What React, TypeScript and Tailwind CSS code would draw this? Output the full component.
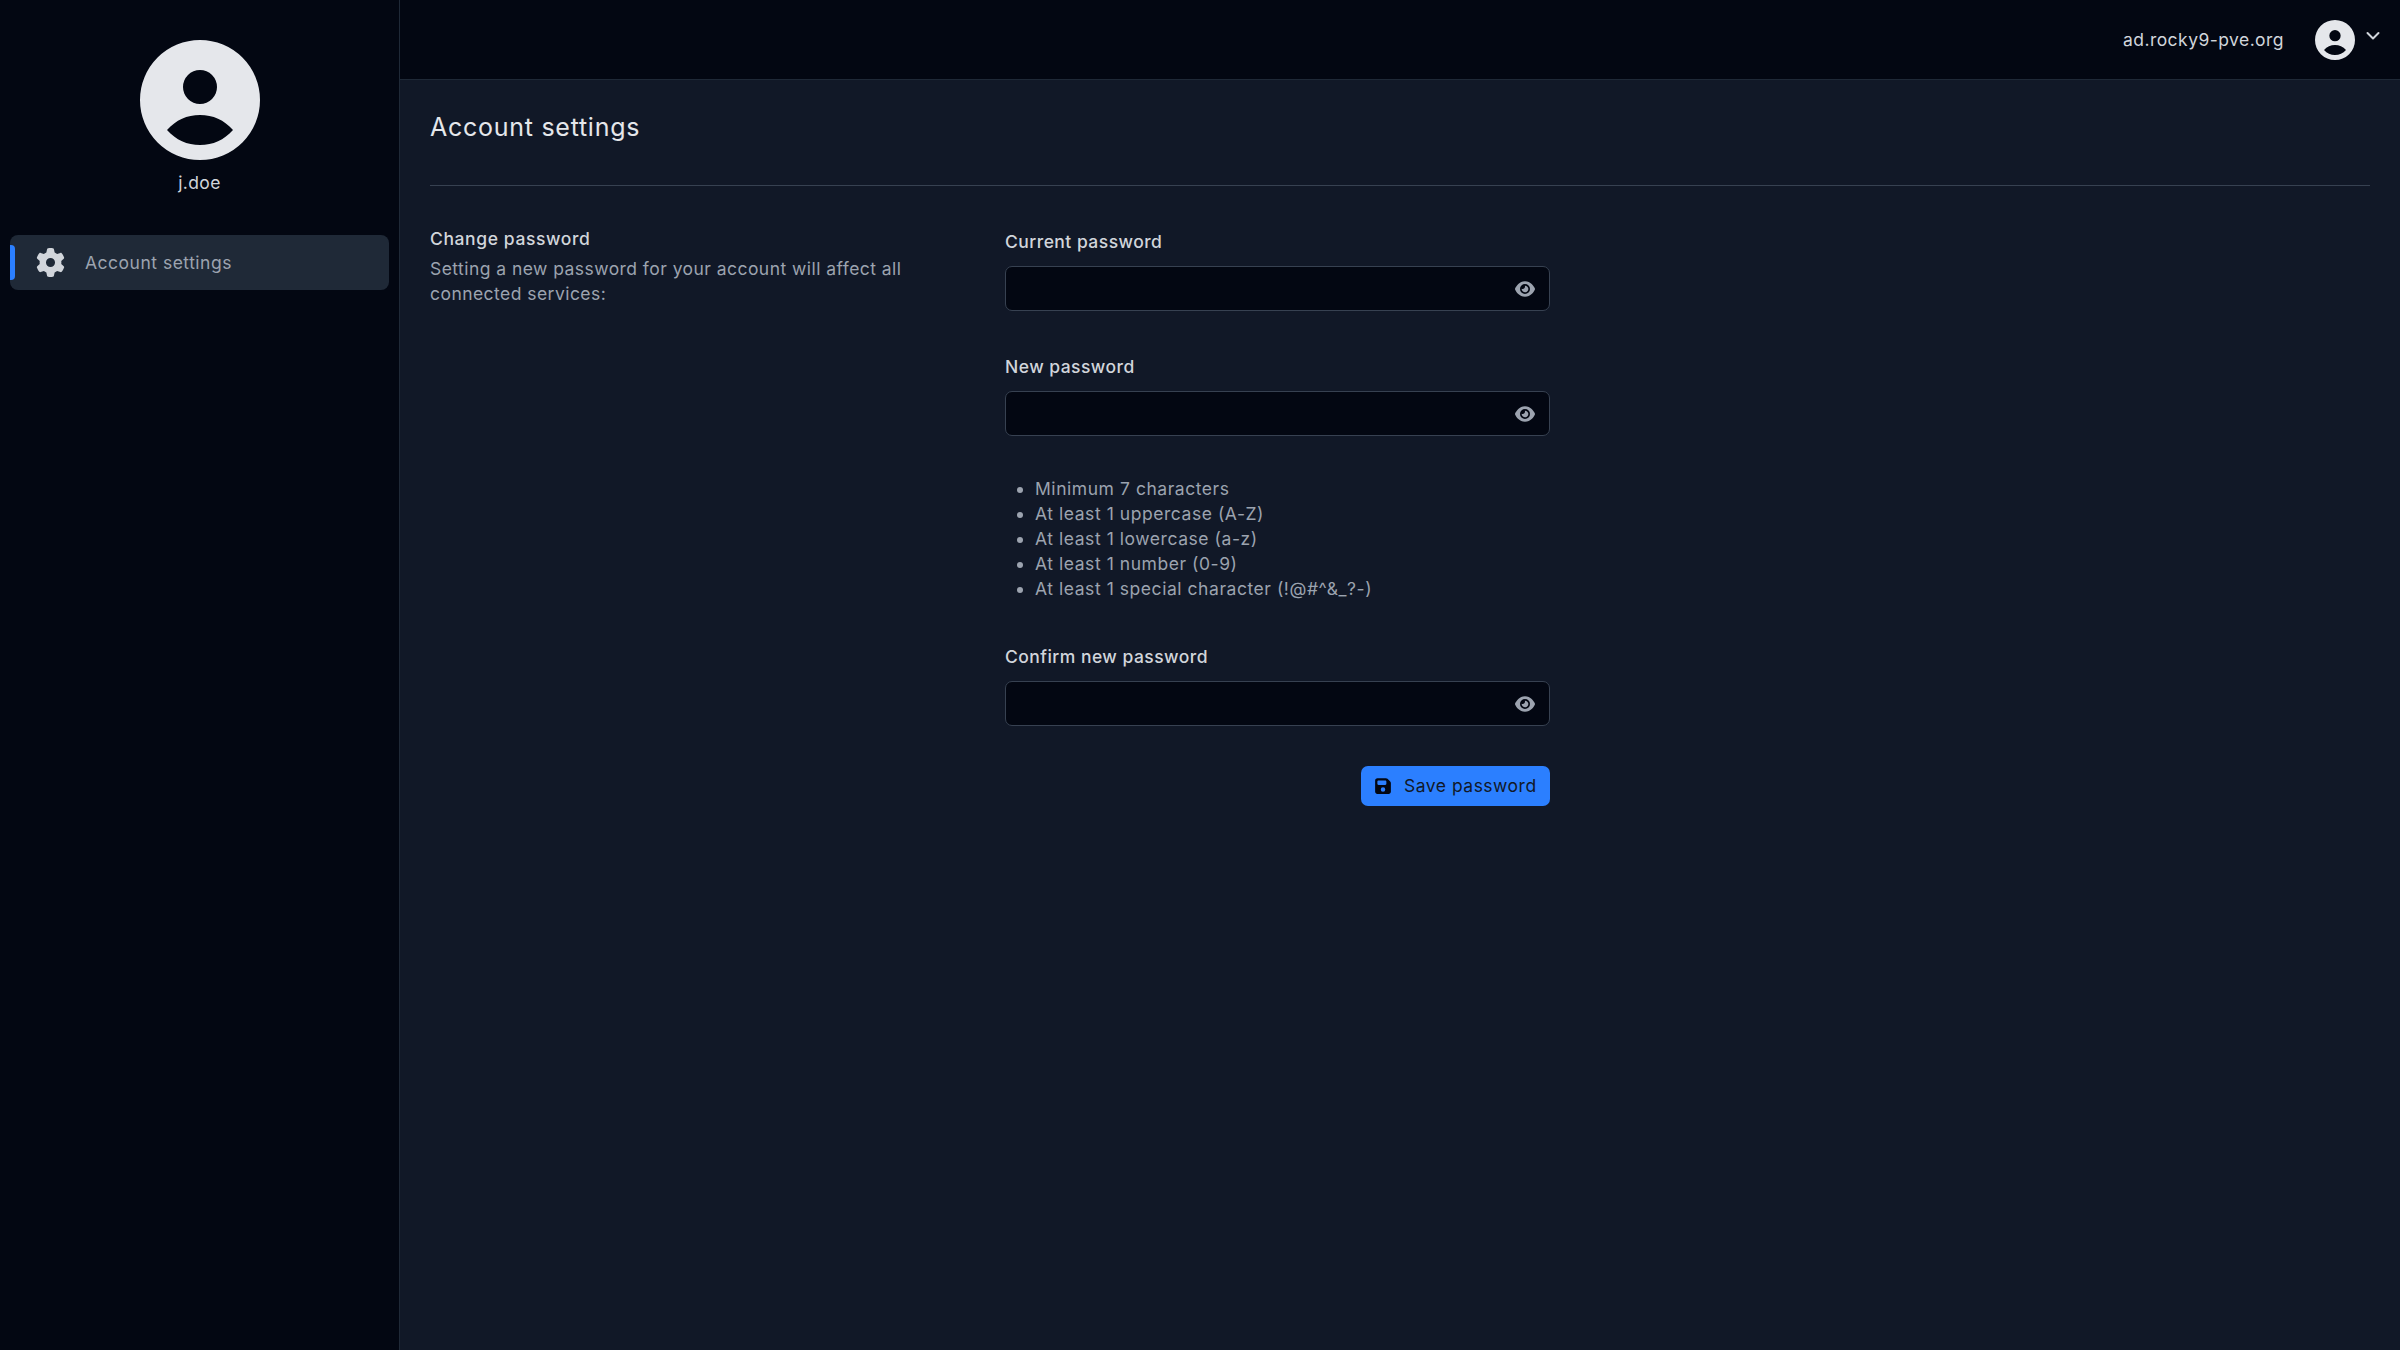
import { FaEye, FaGear, FaFloppyDisk } from "react-icons/fa6";

const font = "font-['Inter','Liberation_Sans',sans-serif]";

const Avatar = ({ className }: { className: string }) => (
  <svg viewBox="0 0 120 120" className={className}>
    <path
      fill="#e5e7eb"
      fillRule="evenodd"
      d="M60 0a60 60 0 1 1 0 120A60 60 0 0 1 60 0Zm0 30a17 17 0 1 0 0 34 17 17 0 0 0 0-34ZM27 90c9 10 20 15 33 15s24-5 33-15c-9-10-20-15-33-15s-24 5-33 15Z"
    />
  </svg>
);

const PasswordField = ({ label }: { label: string }) => (
  <div>
    <label className="block text-[17.5px] leading-[25px] font-medium tracking-[0.46px] text-[#d1d5db]">{label}</label>
    <div className="mt-3 flex h-[45px] items-center justify-end rounded-[7px] border border-[#374151] bg-[#030712] pr-[14px]">
      <FaEye className="h-[20px] w-[20px] text-[#9ca3af]" />
    </div>
  </div>
);

const rules = [
  "Minimum 7 characters",
  "At least 1 uppercase (A-Z)",
  "At least 1 lowercase (a-z)",
  "At least 1 number (0-9)",
  "At least 1 special character (!@#^&_?-)",
];

export default function App() {
  return (
    <div className={`${font} flex h-[1350px] w-[2400px] overflow-hidden bg-[#111827]`}>
      <aside className="flex w-[400px] shrink-0 flex-col items-center border-r border-[#1f2937] bg-[#030712] pt-[40px]">
        <Avatar className="h-[120px] w-[120px]" />
        <div className="mt-[10px] text-[17.5px] leading-[25px] tracking-[0.4px] text-[#d1d5db]">j.doe</div>
        <div className="mt-[40px] w-full px-[10px]">
          <div className="flex h-[55px] items-center rounded-[8px] bg-[#1f2937] pr-3">
            <div className="h-[35px] w-[5px] rounded-r bg-blue-500" />
            <FaGear className="ml-[21px] h-[29px] w-[29px] text-[#d1d5db]" />
            <span className="mt-[1px] ml-[20px] text-[17.5px] tracking-[0.5px] text-[#9ca3af]">Account settings</span>
          </div>
        </div>
      </aside>

      <div className="flex min-w-0 flex-1 flex-col">
        <header className="flex h-[80px] items-center justify-end border-b border-[#1f2937] bg-[#030712] pr-[20px]">
          <span className="mt-[1px] text-[17.5px] tracking-[0.45px] text-[#d1d5db]">ad.rocky9-pve.org</span>
          <Avatar className="ml-[31px] h-[40px] w-[40px]" />
          <svg viewBox="0 0 14 10" className="mb-[8px] ml-[11px] h-[10px] w-[14px] text-[#d1d5db]" fill="none" stroke="currentColor" strokeWidth="2" strokeLinecap="round" strokeLinejoin="round">
            <path d="M1.5 2l5.5 5.5L12.5 2" />
          </svg>
        </header>

        <main className="px-[30px] pt-[30px]">
          <h1 className="border-b border-[#374151] pb-[40px] text-[25px] leading-[35px] tracking-[0.73px] text-[#e5e7eb]">Account settings</h1>
          <div className="flex pt-[40px]">
            <div className="w-[575px] shrink-0">
              <h2 className="text-[17.5px] leading-[25px] font-medium tracking-[0.6px] text-[#d1d5db]">Change password</h2>
              <p className="mt-[5px] w-[510px] text-[17.5px] leading-[25px] tracking-[0.45px] text-[#9ca3af]">
                Setting a new password for your account will affect all connected services:
              </p>
            </div>
            <form className="w-[545px] pt-[3px]">
              <PasswordField label="Current password" />
              <div className="mt-[43px]">
                <PasswordField label="New password" />
              </div>
              <ul className="mt-[40px] list-disc pl-[30px] text-[17.5px] leading-[25px] tracking-[0.55px] text-[#9ca3af]">
                {rules.map((rule) => (
                  <li key={rule}>{rule}</li>
                ))}
              </ul>
              <div className="mt-[43px]">
                <PasswordField label="Confirm new password" />
              </div>
              <div className="mt-[40px] flex justify-end">
                <button type="button" className="flex h-[40px] w-[189px] items-center rounded-[7px] bg-blue-500 pl-[13px] text-[17.5px] tracking-[0.5px] text-[#111827]">
                  <FaFloppyDisk className="h-[18px] w-[18px] text-[#030712]" />
                  <span className="mt-[1px] ml-[12px]">Save password</span>
                </button>
              </div>
            </form>
          </div>
        </main>
      </div>
    </div>
  );
}
